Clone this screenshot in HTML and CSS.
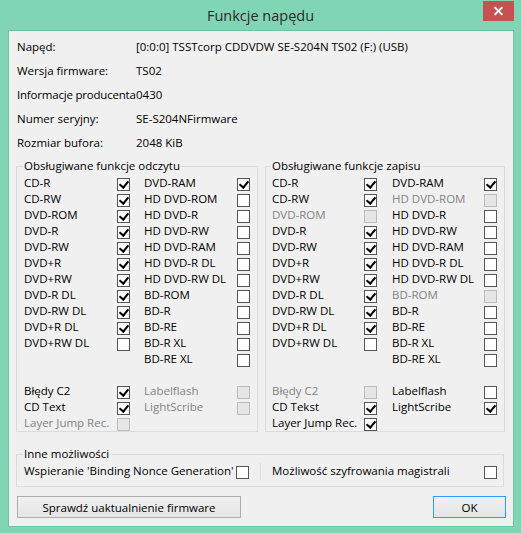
FILE: index.html
```html
<!DOCTYPE html>
<html>
  <head>
    <meta charset="UTF-8" />
    <title>Funkcje napędu</title>
    <link rel="stylesheet" href="styles.css">
  </head>
  <body>
    <div class="window">
      <div class="titlebar">
        <div class="title">Funkcje napędu</div>
        <button class="close" aria-label="Zamknij"></button>
      </div>

      <div class="client">
        <div class="info">
          <span>Napęd:</span><span>[0:0:0] TSSTcorp CDDVDW SE-S204N TS02 (F:) (USB)</span>
          <span>Wersja firmware:</span><span>TS02</span>
          <span class="tight">Informacje producenta</span><span>0430</span>
          <span>Numer seryjny:</span><span>SE-S204NFirmware</span>
          <span>Rozmiar bufora:</span><span>2048 KiB</span>
        </div>

        <div class="groups">
          <fieldset class="group group-read">
            <legend>Obsługiwane funkcje odczytu</legend>
            <div class="checks">
              <div class="check"><span>CD-R</span><i class="box on"></i></div>
              <div class="check"><span>DVD-RAM</span><i class="box on"></i></div>
              <div class="check"><span>CD-RW</span><i class="box on"></i></div>
              <div class="check"><span>HD DVD-ROM</span><i class="box"></i></div>
              <div class="check"><span>DVD-ROM</span><i class="box on"></i></div>
              <div class="check"><span>HD DVD-R</span><i class="box"></i></div>
              <div class="check"><span>DVD-R</span><i class="box on"></i></div>
              <div class="check"><span>HD DVD-RW</span><i class="box"></i></div>
              <div class="check"><span>DVD-RW</span><i class="box on"></i></div>
              <div class="check"><span>HD DVD-RAM</span><i class="box"></i></div>
              <div class="check"><span>DVD+R</span><i class="box on"></i></div>
              <div class="check"><span>HD DVD-R DL</span><i class="box"></i></div>
              <div class="check"><span>DVD+RW</span><i class="box on"></i></div>
              <div class="check"><span>HD DVD-RW DL</span><i class="box"></i></div>
              <div class="check"><span>DVD-R DL</span><i class="box on"></i></div>
              <div class="check"><span>BD-ROM</span><i class="box"></i></div>
              <div class="check"><span>DVD-RW DL</span><i class="box on"></i></div>
              <div class="check"><span>BD-R</span><i class="box"></i></div>
              <div class="check"><span>DVD+R DL</span><i class="box on"></i></div>
              <div class="check"><span>BD-RE</span><i class="box"></i></div>
              <div class="check"><span>DVD+RW DL</span><i class="box"></i></div>
              <div class="check"><span>BD-R XL</span><i class="box"></i></div>
              <div></div>
              <div class="check"><span>BD-RE XL</span><i class="box"></i></div>
              <div class="spacer"></div>
              <div class="check"><span>Błędy C2</span><i class="box on"></i></div>
              <div class="check dim"><span>Labelflash</span><i class="box"></i></div>
              <div class="check"><span>CD Text</span><i class="box on"></i></div>
              <div class="check dim"><span>LightScribe</span><i class="box"></i></div>
              <div class="check dim"><span>Layer Jump Rec.</span><i class="box"></i></div>
            </div>
          </fieldset>

          <fieldset class="group group-write">
            <legend>Obsługiwane funkcje zapisu</legend>
            <div class="checks">
              <div class="check"><span>CD-R</span><i class="box on"></i></div>
              <div class="check"><span>DVD-RAM</span><i class="box on"></i></div>
              <div class="check"><span>CD-RW</span><i class="box on"></i></div>
              <div class="check dim"><span>HD DVD-ROM</span><i class="box"></i></div>
              <div class="check dim"><span>DVD-ROM</span><i class="box"></i></div>
              <div class="check"><span>HD DVD-R</span><i class="box"></i></div>
              <div class="check"><span>DVD-R</span><i class="box on"></i></div>
              <div class="check"><span>HD DVD-RW</span><i class="box"></i></div>
              <div class="check"><span>DVD-RW</span><i class="box on"></i></div>
              <div class="check"><span>HD DVD-RAM</span><i class="box"></i></div>
              <div class="check"><span>DVD+R</span><i class="box on"></i></div>
              <div class="check"><span>HD DVD-R DL</span><i class="box"></i></div>
              <div class="check"><span>DVD+RW</span><i class="box on"></i></div>
              <div class="check"><span>HD DVD-RW DL</span><i class="box"></i></div>
              <div class="check"><span>DVD-R DL</span><i class="box on"></i></div>
              <div class="check dim"><span>BD-ROM</span><i class="box"></i></div>
              <div class="check"><span>DVD-RW DL</span><i class="box on"></i></div>
              <div class="check"><span>BD-R</span><i class="box"></i></div>
              <div class="check"><span>DVD+R DL</span><i class="box on"></i></div>
              <div class="check"><span>BD-RE</span><i class="box"></i></div>
              <div class="check"><span>DVD+RW DL</span><i class="box"></i></div>
              <div class="check"><span>BD-R XL</span><i class="box"></i></div>
              <div></div>
              <div class="check"><span>BD-RE XL</span><i class="box"></i></div>
              <div class="spacer"></div>
              <div class="check dim"><span>Błędy C2</span><i class="box"></i></div>
              <div class="check"><span>Labelflash</span><i class="box"></i></div>
              <div class="check"><span>CD Tekst</span><i class="box on"></i></div>
              <div class="check"><span>LightScribe</span><i class="box on"></i></div>
              <div class="check"><span>Layer Jump Rec.</span><i class="box on"></i></div>
            </div>
          </fieldset>
        </div>

        <fieldset class="group group-other">
          <legend>Inne możliwości</legend>
          <div class="other-row">
            <span>Wspieranie 'Binding Nonce Generation'</span>
            <i class="box"></i>
            <span></span>
            <span class="separator"></span>
            <span></span>
            <span>Możliwość szyfrowania magistrali</span>
            <i class="box"></i>
          </div>
        </fieldset>

        <div class="actions">
          <button class="btn btn-update">Sprawdź uaktualnienie firmware</button>
          <button class="btn btn-ok">OK</button>
        </div>
      </div>
    </div>
  </body>
</html>
```

FILE: styles.css
```css
* {
  box-sizing: border-box;
}

body {
  margin: 0;
  font-family: "Open Sans", "Noto Sans", sans-serif;
  font-size: 11.5px;
  color: #000000;
}

.window {
  width: 521px;
  height: 533px;
  background-color: #80d6b4;
  display: flex;
  flex-direction: column;
}

/* Title bar */
.titlebar {
  height: 30px;
  display: grid;
  grid-template-columns: 1fr auto 1fr;
}

.title {
  grid-column: 2;
  align-self: center;
  font-size: 14.5px;
  line-height: 20px;
  color: #2b2b2b;
  margin-top: 1px;
}

.close {
  grid-column: 3;
  justify-self: end;
  align-self: start;
  width: 31px;
  height: 20px;
  margin: 1px 7px 0 0;
  padding: 0;
  border: none;
  background-color: #c75050;
  position: relative;
}

.close::before,
.close::after {
  content: '';
  position: absolute;
  left: 10px;
  top: 9px;
  width: 11px;
  height: 2px;
  background-color: #ffffff;
  transform: rotate(45deg);
}

.close::after {
  transform: rotate(-45deg);
}

/* Client area */
.client {
  margin: 0 7px 0 8px;
  height: 497px;
  border: 1px solid #70c1a2;
  background-color: #f0f0f0;
  padding: 3px 8px 0 7px;
}

.info {
  display: grid;
  grid-template-columns: 119px 1fr;
  grid-auto-rows: 24px;
  align-items: center;
  margin-left: 1px;
  white-space: nowrap;
}

.info .tight {
  letter-spacing: -0.2px;
}

.groups {
  display: flex;
  gap: 7px;
  margin-top: 4px;
}

.group {
  margin: 0;
  min-width: 0;
  border: 1px solid #dcdcdc;
  padding: 1px 0 0 7px;
}

.group legend {
  padding: 0 1px;
  margin-left: -1px;
  line-height: 16px;
}

.group-read {
  width: 242px;
}

.group-write {
  width: 240px;
  padding-left: 6px;
}

.checks {
  display: grid;
  grid-template-columns: 106px 106px;
  grid-auto-rows: 16px;
  column-gap: 14px;
  line-height: 16px;
}

.group-write .checks {
  grid-template-columns: 105px 105px;
  column-gap: 15px;
}

.check {
  display: flex;
  justify-content: space-between;
  white-space: nowrap;
}

.check.dim {
  color: #838383;
}

.spacer {
  grid-column: 1 / -1;
}

/* Checkbox */
.box {
  flex: none;
  position: relative;
  width: 13px;
  height: 13px;
  margin-top: 3px;
  border: 1px solid #555555;
  background-color: #ffffff;
}

.box.on::after {
  content: '';
  position: absolute;
  left: 3px;
  top: 0px;
  width: 4px;
  height: 7px;
  border-right: 2px solid #000000;
  border-bottom: 2px solid #000000;
  transform: rotate(40deg);
}

.dim .box {
  border-color: #bcbcbc;
  background-color: #e6e6e6;
}

.group-other {
  width: 488px;
  margin-top: 14px;
  padding: 1px 0 7px 7px;
}

.other-row {
  display: grid;
  grid-template-columns: 212px 13px 11px 1px 11px 212px 13px;
  height: 16px;
  line-height: 16px;
  white-space: nowrap;
}

.other-row .box {
  align-self: start;
}

.separator {
  height: 17px;
  background-color: #dcdcdc;
}

/* Buttons */
.actions {
  display: flex;
  justify-content: space-between;
  margin: 9px -1px 0 1px;
}

.btn {
  height: 22px;
  padding: 0;
  border: 1px solid #acacac;
  background: linear-gradient(#f0f0f0, #e5e5e5);
  font-family: inherit;
  font-size: inherit;
  color: #000000;
}

.btn-update {
  width: 224px;
}

.btn-ok {
  width: 73px;
  border-color: #3399ff;
}
```
